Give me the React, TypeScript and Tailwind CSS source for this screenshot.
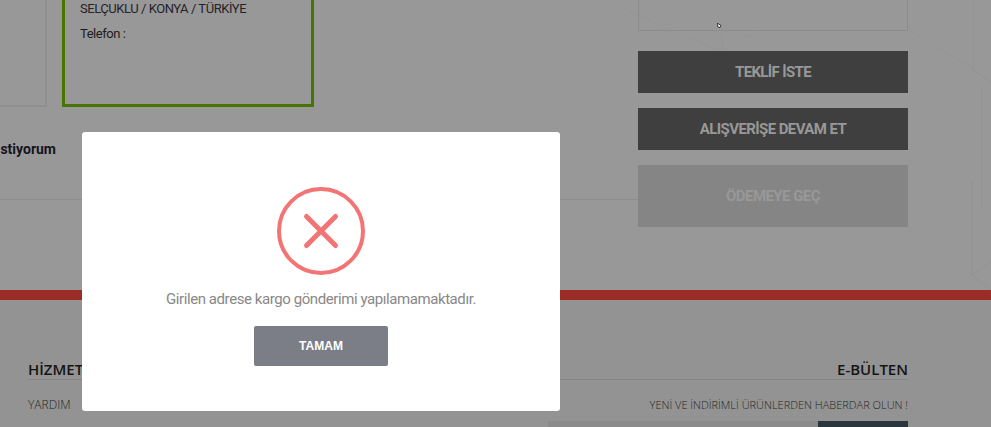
import React from 'react';

const App = () => {
  return (
    <div className="relative h-[427px] w-[991px] overflow-hidden bg-[#989898] font-['Open_Sans',sans-serif]">
      {/* faint background drawing of the page */}
      <svg className="absolute inset-0" width="991" height="300" viewBox="0 0 991 300" fill="none" stroke="#8f8f8f" strokeWidth="1">
        <path d="M973 0V70L991 82M982 88V210M972 180V275L991 290M972 275 991 262" opacity="0.6" />
        <path d="M908 30 972 68M622 8 722 52V50M722 30V50L760 30" opacity="0.35" />
      </svg>

      {/* page behind the dim layer */}
      <div className="relative flex h-[290px]">
        <div className="w-[638px] shrink-0">
          <div className="flex h-[108px]">
            <div className="h-[107px] w-[47px] border-r-2 border-b-2 border-[#909090]" />
            <div className="ml-[15px] h-[107px] w-[252px] border-x-[3px] border-b-[3px] border-[#477500] pl-[15px] font-['Roboto',sans-serif] text-[13px] tracking-[-0.45px] text-[#26222a]">
              <p className="leading-[17px]">SELÇUKLU / KONYA / TÜRKİYE</p>
              <p className="mt-2 leading-[17px] text-[#1c1c1c]">Telefon :</p>
            </div>
          </div>
          <p className="mt-[31px] h-[61px] border-b border-[#8e8e8e] pr-[582px] text-right font-['Roboto',sans-serif] text-sm font-bold whitespace-nowrap text-[#14141c]">
            stiyorum
          </p>
        </div>
        <div className="w-[270px]">
          <div className="h-[31px] border-x border-b border-[#8c8c8c]" />
          <button className="mt-5 flex h-[42px] w-full items-center justify-center bg-[#3f3f3f] font-['Roboto',sans-serif] text-[15px] font-bold tracking-[-0.65px] text-[#989898]">
            TEKLİF İSTE
          </button>
          <button className="mt-[15px] flex h-[42px] w-full items-center justify-center bg-[#3f3f3f] font-['Roboto',sans-serif] text-[15px] font-bold tracking-[-0.6px] text-[#989898]">
            ALIŞVERİŞE DEVAM ET
          </button>
          <button className="mt-[15px] flex h-[62px] w-full items-center justify-center bg-[#858585] font-['Roboto',sans-serif] text-[15px] font-bold tracking-[-0.55px] text-[#989898]">
            ÖDEMEYE GEÇ
          </button>
        </div>
      </div>
      <div className="relative h-[10px] bg-[#9c2c26]" />
      <div className="flex justify-between bg-[#939393] pt-[59px] pr-[83px] pl-7">
        <div className="w-[250px]">
          <h3 className="border-b border-[#848484] text-[15px] leading-5 font-semibold text-[#151515]">HİZMETLER</h3>
          <p className="mt-[17px] text-xs leading-4 font-light text-[#262626]">YARDIM</p>
        </div>
        <div className="w-[360px] text-right">
          <h3 className="border-b border-[#848484] text-[15px] leading-5 font-semibold text-[#151515]">E-BÜLTEN</h3>
          <p className="mt-[17px] text-[11px] leading-4 font-light text-[#262626]">YENİ VE İNDİRİMLİ ÜRÜNLERDEN HABERDAR OLUN !</p>
          <div className="mt-2 flex h-8">
            <div className="flex-1 bg-[#8b8b8b]" />
            <div className="w-[90px] bg-[#2b363c]" />
          </div>
        </div>
      </div>

      {/* mouse cursor caught in the screenshot */}
      <svg className="absolute top-[23px] left-[717px]" width="5" height="5" viewBox="0 0 5 5">
        <path d="M0 0 4 2.5 3 4.5 1 4Z" fill="#fff" stroke="#111" strokeWidth="0.8" />
      </svg>

      {/* dialog */}
      <div className="absolute top-[132px] left-[82px] flex h-[279px] w-[478px] flex-col items-center rounded-[3px] bg-white pt-[55px]">
        <svg width="88" height="88" viewBox="0 0 88 88" fill="none" stroke="#f27474" strokeLinecap="round">
          <circle cx="44" cy="44" r="42" strokeWidth="4" />
          <path d="M29.5 29.5 58.5 58.5M58.5 29.5 29.5 58.5" strokeWidth="5" />
        </svg>
        <p className="mt-[14px] font-['Roboto',sans-serif] text-[15px] leading-5 tracking-[-0.42px] text-[#888888]">Girilen adrese kargo gönderimi yapılamamaktadır.</p>
        <button className="mt-[17px] flex h-10 w-[134px] items-center justify-center rounded-[2px] bg-[#7b7e87] font-['Liberation_Sans',sans-serif] text-xs font-bold text-white">
          TAMAM
        </button>
      </div>
    </div>
  );
};

export default App;
